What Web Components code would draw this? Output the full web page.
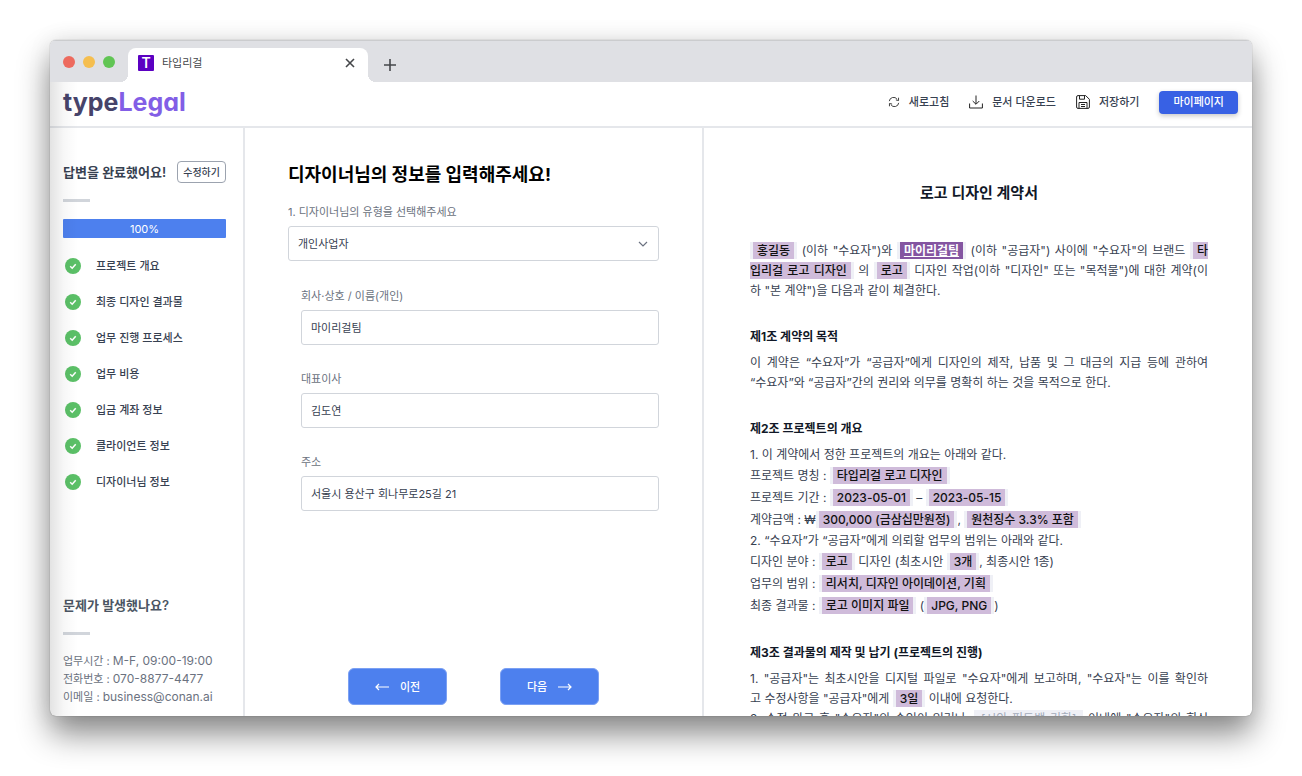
<!DOCTYPE html>
<html lang="ko">
<head>
<meta charset="utf-8">
<title>타입리걸</title>
<style>
  html, body { height: 100%; }
  body {
    margin: 0;
    background: #fff;
    color: #374151;
    font-family: Inter, "Noto Sans CJK KR", sans-serif;
    font-size: 12px;
    line-height: 20px;
  }
</style>
</head>
<body>
<type-legal-app></type-legal-app>

<script>
const define = (name, html, init) => {
  const template = document.createElement('template');
  template.innerHTML = html.trim();
  customElements.define(name, class extends HTMLElement {
    constructor() {
      super();
      this.attachShadow({ mode: 'open' }).append(template.content.cloneNode(true));
    }
    connectedCallback() {
      if (init) init(this, this.shadowRoot);
    }
  });
};

/* Browser frame with a tab strip; the page goes in the slot. */
define('browser-window', `
  <style>
    :host {
      display: flex; flex-direction: column; position: relative;
      min-height: 0; overflow: hidden;
      border-radius: 6px; background: #fff;
    }
    :host::after {
      content: ""; position: absolute; inset: 42px auto 0 0; width: 28px;
      background: linear-gradient(90deg, rgba(0,0,0,.11), rgba(0,0,0,.03) 50%, transparent);
      pointer-events: none;
    }
    .strip {
      flex: none; display: flex; align-items: flex-end; height: 42px;
      background: #dfe0e4; box-shadow: inset 0 1px #cbccce;
    }
    .lights { display: flex; gap: 8px; padding: 0 13px 14px; }
    .lights i { width: 12px; height: 12px; border-radius: 50%; background: #ed6a5e; }
    .lights i:nth-child(2) { background: #f5be4f; }
    .lights i:nth-child(3) { background: #61c554; }
    .tab {
      position: relative; box-sizing: border-box; display: flex; align-items: center; gap: 8px;
      width: 240px; height: 34px; padding: 0 11px 4px 10px;
      background: #fff; border-radius: 8px 8px 0 0; color: #45474a;
    }
    .tab::before, .tab::after {
      content: ""; position: absolute; bottom: 0; width: 8px; height: 8px;
    }
    .tab::before { right: 100%; background: radial-gradient(circle at 0 0, transparent 8px, #fff 8px); }
    .tab::after { left: 100%; background: radial-gradient(circle at 100% 0, transparent 8px, #fff 8px); }
    .fav {
      width: 16px; height: 16px; line-height: 16px; text-align: center; border-radius: 1px;
      background: #5b00c2; color: #fff; font-size: 14px; font-weight: 600;
    }
    .name { flex: 1; font-size: 11px; }
    button { display: flex; padding: 0; border: 0; background: none; color: #45474a; }
    .new { margin: 0 16px 10px; }
  </style>
  <div class="strip">
    <div class="lights"><i></i><i></i><i></i></div>
    <div class="tab">
      <span class="fav">T</span><span class="name">타입리걸</span>
      <button aria-label="탭 닫기"><svg width="14" height="14" viewBox="0 0 14 14" fill="none" stroke="currentColor" stroke-width="1.6"><path d="M3 3l8 8M11 3l-8 8"/></svg></button>
    </div>
    <button class="new" aria-label="새 탭"><svg width="12" height="14" viewBox="0 0 12 14" fill="none" stroke="currentColor" stroke-width="1.6"><path d="M0 7h12M6 1v12"/></svg></button>
  </div>
  <slot></slot>
`);

const ICONS = {
  refresh: [12, '<path d="M1.500 6A5 5 0 0 1 10.600 3.800M12.500 8A5 5 0 0 1 3.400 10.200"/><path d="M12.300 2v3.300L9.200 4.600M1.700 12V8.700l3.100.700"/>'],
  download: [14, '<path d="M7 .500v8.500M3.700 6L7 9.300 10.300 6M.600 8.500V13h12.800V8.500"/>'],
  save: [14, '<path d="M2 .600h7.700l3.700 3.700V12a1.400 1.400 0 0 1-1.400 1.400H2A1.400 1.400 0 0 1 .600 12V2A1.400 1.400 0 0 1 2 .600zM3 13.400V7.500h8v5.900M3.500.600v3.600h5V.600M5 9.500h4M5 11.500h4"/>']
};

define('tool-button', `
  <style>
    :host { display: block; }
    button {
      display: flex; align-items: center; gap: 9px; padding: 0; border: 0;
      background: none; color: #374151; font: 500 11px/20px Inter, "Noto Sans CJK KR", sans-serif;
    }
    svg { color: #222; }
  </style>
  <button><svg viewBox="0 0 14 14" fill="none" stroke="currentColor" aria-hidden="true"></svg><slot></slot></button>
`, (host, root) => {
  const svg = root.querySelector('svg');
  const [size, shape] = ICONS[host.getAttribute('icon')];
  svg.setAttribute('width', size);
  svg.setAttribute('height', size);
  svg.innerHTML = shape;
});

define('app-header', `
  <style>
    :host {
      flex: none; box-sizing: border-box; height: 46px;
      display: flex; align-items: center; justify-content: space-between;
      padding: 0 14px 4px 13px; border-bottom: 2px solid #e5e7eb;
    }
    .logo {
      font: 700 25px/30px Inter, sans-serif; font-feature-settings: "cv11";
      color: #46436a; text-decoration: none;
    }
    .logo span { color: #825ee6; }
    nav { display: flex; align-items: center; gap: 20px; }
    .my {
      height: 23px; padding: 0 14px; border: 0; border-radius: 4px; color: #fff; background: #3861e4;
      font: 500 11px/20px Inter, "Noto Sans CJK KR", sans-serif;
      box-shadow: 0 2px 5px rgba(0,0,0,.22);
    }
  </style>
  <a class="logo" href="#">type<span>Legal</span></a>
  <nav>
    <tool-button icon="refresh">새로고침</tool-button>
    <tool-button icon="download">문서 다운로드</tool-button>
    <tool-button icon="save">저장하기</tool-button>
    <button class="my">마이페이지</button>
  </nav>
`);

define('step-item', `
  <style>
    :host { display: flex; align-items: center; gap: 15px; padding-left: 2px; font-size: 11px; font-weight: 500; line-height: 20px; }
  </style>
  <svg width="16" height="16" viewBox="0 0 16 16" aria-hidden="true"><circle cx="8" cy="8" r="8" fill="#5bc067"/><path d="M5.200 8.300l2 1.900 3.500-4" fill="none" stroke="#fff" stroke-width="1.500"/></svg>
  <slot></slot>
`);

define('side-bar', `
  <style>
    :host {
      display: flex; flex-direction: column; justify-content: space-between; min-height: 0;
      padding: 32px 17px 10px 13px; border-right: 2px solid #e5e7eb;
    }
    .top { display: flex; align-items: center; justify-content: space-between; }
    h2 { margin: 0; font-size: 13px; line-height: 24px; font-weight: 600; }
    .top button {
      height: 22px; padding: 0 5px; border: 1px solid #9ca3af; border-radius: 4px;
      background: #fff; color: #374151; font: 500 10px/20px Inter, "Noto Sans CJK KR", sans-serif;
    }
    hr { width: 27px; height: 3px; margin: 15px 0 17px; border: 0; background: #d1d5db; }
    .bar {
      height: 19px; margin-bottom: 18px; border-radius: 1px;
      background: #4d80ee; color: #fff; text-align: center; font-size: 11px; line-height: 20px;
    }
    .steps { display: grid; gap: 16px; }
    .help { color: #4b5563; }
    address { font-style: normal; font-size: 11px; line-height: 18px; color: #6b7280; }
    address div { display: flex; gap: 3px; white-space: nowrap; }
    address span { font-size: 12px; }
  </style>
  <section>
    <div class="top"><h2>답변을 완료했어요!</h2><button>수정하기</button></div>
    <hr>
    <div class="bar">100%</div>
    <div class="steps">
      <step-item>프로젝트 개요</step-item>
      <step-item>최종 디자인 결과물</step-item>
      <step-item>업무 진행 프로세스</step-item>
      <step-item>업무 비용</step-item>
      <step-item>입금 계좌 정보</step-item>
      <step-item>클라이언트 정보</step-item>
      <step-item>디자이너님 정보</step-item>
    </div>
  </section>
  <section class="help">
    <h2>문제가 발생했나요?</h2>
    <hr>
    <address>
      <div>업무시간 : <span>M-F, 09:00-19:00</span></div>
      <div>전화번호 : <span>070-8877-4477</span></div>
      <div>이메일 : <span>business@conan.ai</span></div>
    </address>
  </section>
`);

const FIELD_CSS = `
  :host { display: block; }
  label { display: block; margin-bottom: 4px; font-size: 11px; line-height: 20px; color: #6b7280; }
  input, select {
    display: block; box-sizing: border-box; width: 100%; height: 35px; padding: 0 9px 2px;
    border: 1px solid #d1d5db; border-radius: 3px; background: #fff; color: #374151;
    font: 11px/20px Inter, "Noto Sans CJK KR", sans-serif; appearance: none; outline: 0;
  }
  select { padding-bottom: 0; }
  .box { display: grid; align-items: center; }
  .box > * { grid-area: 1 / 1; }
  .box svg { justify-self: end; margin-right: 11px; pointer-events: none; }
`;

define('text-field', `
  <style>${FIELD_CSS}</style>
  <label for="f"></label><input id="f" type="text">
`, (host, root) => {
  root.querySelector('label').textContent = host.getAttribute('label');
  root.querySelector('input').value = host.getAttribute('value');
});

define('select-field', `
  <style>${FIELD_CSS}</style>
  <label for="f"></label>
  <div class="box">
    <select id="f"><option></option></select>
    <svg width="10" height="10" viewBox="0 0 10 10" fill="none" stroke="#6b7280" stroke-width="1.200"><path d="M1 3l4 4 4-4"/></svg>
  </div>
`, (host, root) => {
  root.querySelector('label').textContent = host.getAttribute('label');
  root.querySelector('option').textContent = host.getAttribute('value');
});

define('designer-form', `
  <style>
    :host {
      display: flex; flex-direction: column; justify-content: space-between; min-height: 0;
      padding: 33px 43px 11px; border-right: 2px solid #e5e7eb;
    }
    h1 { margin: 0 0 13px; font-size: 18px; line-height: 28px; font-weight: 700; color: #000; }
    .nested { display: grid; gap: 24px; margin-top: 25px; padding-left: 13px; }
    .actions { display: flex; justify-content: center; gap: 53px; }
    .actions button {
      display: flex; align-items: center; justify-content: center; gap: 11px;
      width: 99px; height: 37px; padding: 0; border: 1px solid #7ba0f3; border-radius: 6px;
      background: #4d80ee; color: #fff; font: 500 11px/20px Inter, "Noto Sans CJK KR", sans-serif;
    }
  </style>
  <form>
    <h1>디자이너님의 정보를 입력해주세요!</h1>
    <select-field label="1. 디자이너님의 유형을 선택해주세요" value="개인사업자"></select-field>
    <div class="nested">
      <text-field label="회사·상호 / 이름(개인)" value="마이리걸팀"></text-field>
      <text-field label="대표이사" value="김도연"></text-field>
      <text-field label="주소" value="서울시 용산구 회나무로25길 21"></text-field>
    </div>
  </form>
  <div class="actions">
    <button><svg width="14" height="8" viewBox="0 0 14 8" fill="none" stroke="#fff" stroke-width="1.200"><path d="M14 4H1M4 1L1 4l3 3"/></svg>이전</button>
    <button>다음<svg width="14" height="8" viewBox="0 0 14 8" fill="none" stroke="#fff" stroke-width="1.200"><path d="M0 4h13M10 1l3 3-3 3"/></svg></button>
  </div>
`);

/* Value filled in from the form, shown highlighted inside the contract. */
define('filled-value', `<style>
    :host { display: inline; padding: 1px 3px; background: #eff0f6; }
    span { padding: 1px 4px; background: #cfbbda; color: #111; font-weight: 500; }
    :host([active]) span { background: #8455a1; color: #fff; font-weight: 700; text-decoration: underline; }
    :host([empty]) span { background: #eff0f6; color: #a3abba; font-weight: 400; }
  </style><span><slot></slot></span>`);

define('contract-view', `
  <style>
    :host { display: block; min-height: 0; overflow: hidden; padding: 51px 44px 0 46px; }
    h2 { margin: 0 0 34px; text-align: center; font-size: 15px; line-height: 28px; font-weight: 600; color: #111827; }
    h3 { margin: 26px 0 6px; font-size: 12px; line-height: 20px; font-weight: 700; color: #111827; }
    p { margin: 0; }
    .full { display: block; text-align: justify; text-align-last: justify; }
    .row { line-height: 22px; }
  </style>
  <h2>로고 디자인 계약서</h2>
  <p><span class="full"><filled-value>홍길동</filled-value> (이하 "수요자")와 <filled-value active>마이리걸팀</filled-value> (이하 "공급자") 사이에 "수요자"의 브랜드 <filled-value>타<br>입리걸 로고 디자인</filled-value> 의 <filled-value>로고</filled-value> 디자인 작업(이하 "디자인" 또는 "목적물")에 대한 계약(이</span>하 "본 계약")을 다음과 같이 체결한다.</p>
  <h3>제1조 계약의 목적</h3>
  <p><span class="full">이 계약은 “수요자”가 “공급자”에게 디자인의 제작, 납품 및 그 대금의 지급 등에 관하여</span>“수요자”와 “공급자”간의 권리와 의무를 명확히 하는 것을 목적으로 한다.</p>
  <h3>제2조 프로젝트의 개요</h3>
  <p>1. 이 계약에서 정한 프로젝트의 개요는 아래와 같다.</p>
  <p class="row">프로젝트 명칭 : <filled-value>타입리걸 로고 디자인</filled-value></p>
  <p class="row">프로젝트 기간 : <filled-value>2023-05-01</filled-value> – <filled-value>2023-05-15</filled-value></p>
  <p class="row">계약금액 : ₩<filled-value>300,000 (금삼십만원정)</filled-value>, <filled-value>원천징수 3.3% 포함</filled-value></p>
  <p>2. “수요자”가 “공급자”에게 의뢰할 업무의 범위는 아래와 같다.</p>
  <p class="row">디자인 분야 : <filled-value>로고</filled-value> 디자인 (최초시안 <filled-value>3개</filled-value>, 최종시안 1종)</p>
  <p class="row">업무의 범위 : <filled-value>리서치, 디자인 아이데이션, 기획</filled-value></p>
  <p class="row">최종 결과물 : <filled-value>로고 이미지 파일</filled-value> (<filled-value>JPG, PNG</filled-value>)</p>
  <h3>제3조 결과물의 제작 및 납기 (프로젝트의 진행)</h3>
  <p><span class="full">1. "공급자"는 최초시안을 디지털 파일로 "수요자"에게 보고하며, "수요자"는 이를 확인하</span>고 수정사항을 "공급자"에게 <filled-value>3일</filled-value> 이내에 요청한다.</p>
  <p class="full">2. 수정 완료 후 "수요자"의 승인이 있거나, <filled-value empty>[시안 피드백 기한]</filled-value> 이내에 "수요자"의 회신</p>
`);

define('type-legal-app', `
  <style>
    :host { display: grid; box-sizing: border-box; height: 100vh; padding: 40px 50px 60px; overflow: hidden; }
    browser-window { box-shadow: 0 0 1px rgba(0,0,0,.5), 0 18px 32px rgba(0,0,0,.46), 0 0 24px rgba(0,0,0,.08); }
    main {
      flex: 1; min-height: 0; display: grid;
      grid-template-columns: 195px minmax(0, 459fr) minmax(0, 548fr);
      grid-template-rows: minmax(0, 1fr);
    }
  </style>
  <browser-window>
    <app-header></app-header>
    <main>
      <side-bar></side-bar>
      <designer-form></designer-form>
      <contract-view></contract-view>
    </main>
  </browser-window>
`);
</script>
</body>
</html>
